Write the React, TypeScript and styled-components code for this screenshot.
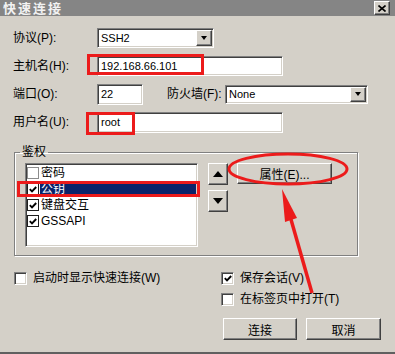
import styled, { createGlobalStyle } from "styled-components";

const GlobalStyle = createGlobalStyle`
  html, body {
    margin: 0;
    padding: 0;
    background: #d4d0c8;
  }
  body {
    font-family: "Liberation Sans", "Noto Sans CJK SC", sans-serif;
    font-size: 12px;
    color: #000;
  }
`;

const raised = `
  box-sizing: border-box;
  border: 1px solid;
  border-color: #ffffff #404040 #404040 #ffffff;
  box-shadow: inset -1px -1px 0 #808080, inset 1px 1px 0 #d4d0c8;
  background: #d4d0c8;
`;

const sunken = `
  box-sizing: border-box;
  border: 1px solid;
  border-color: #808080 #ffffff #ffffff #808080;
  box-shadow: inset 1px 1px 0 #404040, inset -1px -1px 0 #d4d0c8;
  background: #ffffff;
`;

const Window = styled.div`
  position: relative;
  width: 395px;
  height: 354px;
  box-sizing: border-box;
  background: #d4d0c8;
  border-bottom: 2px solid #606060;
  overflow: hidden;
`;

const TitleBar = styled.div`
  height: 16px;
  background: #858585;
  display: flex;
  align-items: center;
  justify-content: space-between;
  padding: 0 5px 0 3px;
`;

const Title = styled.span`
  color: #f2f2f2;
  font-family: "Noto Sans CJK SC", sans-serif;
  font-weight: bold;
  font-size: 13px;
  letter-spacing: 2px;
  line-height: 14px;
`;

const CloseButton = styled.div`
  ${raised}
  width: 16px;
  height: 14px;
  display: flex;
  align-items: center;
  justify-content: center;
`;

const Body = styled.div`
  padding: 12px 0 0 13px;
`;

const FieldRow = styled.div`
  display: flex;
  align-items: center;
  height: 20px;
  & + & {
    margin-top: 8px;
  }
`;

const Label = styled.span<{ $w: number; $ml?: number }>`
  width: ${(p) => p.$w}px;
  margin-left: ${(p) => p.$ml ?? 0}px;
  line-height: 14px;
  white-space: nowrap;
`;

const TextBox = styled.div<{ $w: number; $h?: number }>`
  ${sunken}
  width: ${(p) => p.$w}px;
  height: ${(p) => p.$h ?? 20}px;
  padding: 0 3px;
  display: flex;
  align-items: center;
  font-size: 11px;
`;

const Select = styled.div<{ $w: number; $h?: number }>`
  ${sunken}
  width: ${(p) => p.$w}px;
  height: ${(p) => p.$h ?? 20}px;
  padding: 1px;
  display: flex;
  align-items: stretch;
`;

const SelectValue = styled.span`
  flex: 1;
  display: flex;
  align-items: center;
  padding-left: 2px;
  font-size: 11px;
`;

const DropButton = styled.span`
  ${raised}
  width: 16px;
  display: flex;
  align-items: center;
  justify-content: center;
`;

const Triangle = styled.span<{ $dir: "up" | "down"; $size: number }>`
  width: 0;
  height: 0;
  border-left: ${(p) => p.$size}px solid transparent;
  border-right: ${(p) => p.$size}px solid transparent;
  ${(p) =>
    p.$dir === "up"
      ? `border-bottom: ${p.$size + 1}px solid #000;`
      : `border-top: ${p.$size + 1}px solid #000;`}
`;

const Group = styled.fieldset`
  margin: 14px 0 0 1px;
  width: 344px;
  box-sizing: border-box;
  padding: 5px 0 8px 0;
  border: 1px solid #808080;
  box-shadow: 1px 1px 0 #ffffff, inset 1px 1px 0 #ffffff;
  min-width: 0;
`;

const Legend = styled.legend`
  margin-left: 5px;
  padding: 0 2px;
  font-size: 12px;
  line-height: 12px;
`;

const GroupContent = styled.div`
  display: flex;
  align-items: flex-start;
  padding-left: 10px;
`;

const AuthList = styled.div`
  ${sunken}
  width: 173px;
  height: 84px;
  padding: 1px;
`;

const ListItem = styled.div`
  display: flex;
  align-items: center;
  height: 16px;
`;

const ListCheck = styled.span<{ $checked: boolean }>`
  box-sizing: border-box;
  width: 12px;
  height: 12px;
  border: 1px solid ${(p) => (p.$checked ? "#1e1e1e" : "#8c8c8c")};
  background: #fff;
  display: flex;
  align-items: center;
  justify-content: center;
`;

const ItemText = styled.span<{ $selected: boolean }>`
  flex: 1;
  height: 15px;
  line-height: 15px;
  margin-left: 1px;
  padding-left: 1px;
  background: ${(p) => (p.$selected ? "#0a246a" : "transparent")};
  color: ${(p) => (p.$selected ? "#fff" : "#000")};
  white-space: nowrap;
`;

const ArrowColumn = styled.div`
  display: flex;
  flex-direction: column;
  gap: 5px;
  margin-left: 10px;
`;

const SquareButton = styled.div`
  ${raised}
  width: 20px;
  height: 22px;
  display: flex;
  align-items: center;
  justify-content: center;
`;

const PushButton = styled.div<{ $w: number; $h: number; $ml?: number }>`
  ${raised}
  width: ${(p) => p.$w}px;
  height: ${(p) => p.$h}px;
  margin-left: ${(p) => p.$ml ?? 0}px;
  display: flex;
  align-items: center;
  justify-content: center;
  white-space: nowrap;
`;

const Bottom = styled.div`
  display: grid;
  grid-template-columns: 207px auto;
  margin-top: 16px;
`;

const OptionColumn = styled.div`
  display: flex;
  flex-direction: column;
  gap: 8px;
  padding-left: 1px;
`;

const CheckOption = styled.div`
  display: flex;
  align-items: center;
  gap: 6px;
  height: 13px;
  line-height: 13px;
  white-space: nowrap;
`;

const CheckBox3D = styled.span`
  ${sunken}
  width: 13px;
  height: 13px;
  display: flex;
  align-items: center;
  justify-content: center;
`;

const ButtonRow = styled.div`
  display: flex;
  gap: 9px;
  margin: 12px 0 0 3px;
`;

const Annotations = styled.svg`
  position: absolute;
  left: 0;
  top: 0;
  width: 395px;
  height: 354px;
  pointer-events: none;
`;

function Check() {
  return (
    <svg width="8" height="7" viewBox="0 0 8 7">
      <polyline points="0.8,3.2 3,5.4 7.2,1" fill="none" stroke="#000" strokeWidth="1.9" />
    </svg>
  );
}

const authItems = [
  { text: "密码", checked: false, selected: false },
  { text: "公钥", checked: true, selected: true },
  { text: "键盘交互", checked: true, selected: false },
  { text: "GSSAPI", checked: true, selected: false },
];

const RED = "#ec1b1b";

export default function App() {
  return (
    <Window>
      <GlobalStyle />
      <TitleBar>
        <Title>快速连接</Title>
        <CloseButton>
          <svg width="8" height="7" viewBox="0 0 8 7">
            <path d="M0.5 0.5 L7.5 6.5 M7.5 0.5 L0.5 6.5" stroke="#000" strokeWidth="1.6" />
          </svg>
        </CloseButton>
      </TitleBar>
      <Body>
        <FieldRow>
          <Label $w={84}>协议(P):</Label>
          <Select $w={117}>
            <SelectValue>SSH2</SelectValue>
            <DropButton>
              <Triangle $dir="down" $size={3} />
            </DropButton>
          </Select>
        </FieldRow>
        <FieldRow>
          <Label $w={84}>主机名(H):</Label>
          <TextBox $w={186}>192.168.66.101</TextBox>
        </FieldRow>
        <FieldRow>
          <Label $w={84}>端口(O):</Label>
          <TextBox $w={46} $h={21}>22</TextBox>
          <Label $w={58} $ml={24}>防火墙(F):</Label>
          <Select $w={143} $h={19}>
            <SelectValue>None</SelectValue>
            <DropButton>
              <Triangle $dir="down" $size={3} />
            </DropButton>
          </Select>
        </FieldRow>
        <FieldRow>
          <Label $w={84}>用户名(U):</Label>
          <TextBox $w={186} $h={21}>root</TextBox>
        </FieldRow>

        <Group>
          <Legend>鉴权</Legend>
          <GroupContent>
            <AuthList>
              {authItems.map((item) => (
                <ListItem key={item.text}>
                  <ListCheck $checked={item.checked}>{item.checked && <Check />}</ListCheck>
                  <ItemText $selected={item.selected}>{item.text}</ItemText>
                </ListItem>
              ))}
            </AuthList>
            <ArrowColumn>
              <SquareButton>
                <Triangle $dir="up" $size={5} />
              </SquareButton>
              <SquareButton>
                <Triangle $dir="down" $size={5} />
              </SquareButton>
            </ArrowColumn>
            <PushButton $w={95} $h={21} $ml={9}>
              属性(E)...
            </PushButton>
          </GroupContent>
        </Group>

        <Bottom>
          <OptionColumn>
            <CheckOption>
              <CheckBox3D />
              启动时显示快速连接(W)
            </CheckOption>
          </OptionColumn>
          <div>
            <OptionColumn>
              <CheckOption>
                <CheckBox3D>
                  <Check />
                </CheckBox3D>
                保存会话(V)
              </CheckOption>
              <CheckOption>
                <CheckBox3D />
                在标签页中打开(T)
              </CheckOption>
            </OptionColumn>
            <ButtonRow>
              <PushButton $w={74} $h={22}>连接</PushButton>
              <PushButton $w={75} $h={22}>取消</PushButton>
            </ButtonRow>
          </div>
        </Bottom>
      </Body>

      <Annotations viewBox="0 0 395 354">
        <rect x="88.5" y="55.5" width="114" height="18" fill="none" stroke={RED} strokeWidth="3" />
        <rect x="87.5" y="113.5" width="46" height="20" fill="none" stroke={RED} strokeWidth="3" />
        <rect x="18.5" y="182.5" width="180" height="13" fill="none" stroke={RED} strokeWidth="3" />
        <ellipse cx="288" cy="169" rx="59" ry="15" fill="none" stroke={RED} strokeWidth="3" />
        <line x1="312" y1="293" x2="290" y2="216" stroke={RED} strokeWidth="3.5" />
        <polygon points="282,189 285,222 297,218" fill={RED} />
      </Annotations>
    </Window>
  );
}
